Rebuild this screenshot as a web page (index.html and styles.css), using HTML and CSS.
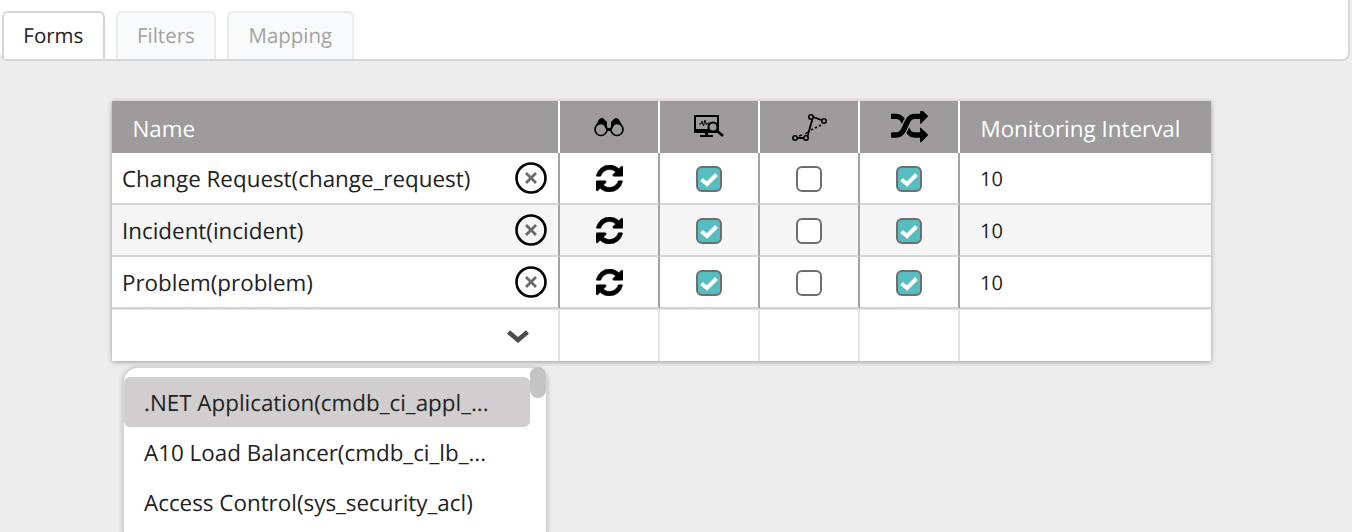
FILE: index.html
```html
<!DOCTYPE html>
<html lang="en">
<head>
<meta charset="utf-8">
<title>Forms</title>
<link rel="stylesheet" href="styles.css">
</head>
<body>
<svg class="defs" width="0" height="0" aria-hidden="true">
  <symbol id="sync" viewBox="128 128 1536 1536"><path d="M1639 1056q0 5-1 7-64 268-268 434.5t-478 166.5q-146 0-282.5-55t-243.5-157l-129 129q-19 19-45 19t-45-19-19-45v-448q0-26 19-45t45-19h448q26 0 45 19t19 45-19 45l-137 137q71 66 161 102t187 36q134 0 250-65t186-179q11-17 53-117 8-23 30-23h192q13 0 22.5 9.5t9.5 22.5zm25-800v448q0 26-19 45t-45 19h-448q-26 0-45-19t-19-45 19-45l138-138q-148-137-349-137-134 0-250 65t-186 179q-11 17-53 117-8 23-30 23h-199q-13 0-22.5-9.5t-9.5-22.5v-7q65-268 270-434.5t480-166.5q146 0 284 55.5t245 156.5l130-129q19-19 45-19t45 19 19 45z"/></symbol>
  <symbol id="remove" viewBox="0 0 32 32"><circle cx="16" cy="16" r="14.500" fill="none" stroke="#000" stroke-width="2.600"/><path d="M11 11l10 10M21 11L11 21" stroke="#6a6a6a" stroke-width="2.800" fill="none"/></symbol>
  <symbol id="on" viewBox="0 0 26 26"><rect x="1" y="1" width="24" height="24" rx="5" fill="#56bdc0" stroke="#6e6e6e" stroke-width="2"/><path d="M5.500 13.500l5.500 4.500 9.500-9.500" fill="none" stroke="#fff" stroke-width="4"/></symbol>
  <symbol id="off" viewBox="0 0 26 26"><rect x="1" y="1" width="24" height="24" rx="5" fill="#fff" stroke="#6e6e6e" stroke-width="2"/></symbol>
</svg>

<nav class="tabbar">
  <span class="tab tab-active">Forms</span>
  <span class="tab">Filters</span>
  <span class="tab">Mapping</span>
</nav>

<main class="content">
  <section class="grid">
    <div class="cell head head-name">Name</div>
    <div class="cell head icon-cell">
      <svg class="hicon" width="32" height="20" viewBox="0 0 32 20"><circle cx="8" cy="12.500" r="6" fill="none" stroke="#000" stroke-width="1.700"/><circle cx="24" cy="12.500" r="6" fill="none" stroke="#000" stroke-width="1.700"/><path d="M2 10L6 2.500Q8 0 10.500 1.500L14 5V11H18V5L21.500 1.500Q24 0 26 2.500L30 10 26 6.500H22L18 14H14L10 6.500H6Z"/></svg>
    </div>
    <div class="cell head icon-cell">
      <svg class="hicon" width="30" height="24" viewBox="0 0 30 24"><path d="M1 1h23v16H1z" fill="none" stroke="#000" stroke-width="2"/><path d="M1 14h15v3H1zM11 17h3v3h-3zM6 20h13v2H6z"/><path d="M5 9h2l1-3 1.500 5 1.500-6 1.500 5 1-2h2" fill="none" stroke="#000" stroke-width="1"/><circle cx="19" cy="12" r="4.500" fill="#9d9b9c" stroke="#000" stroke-width="2"/><path d="M22 15l7 6" stroke="#000" stroke-width="2.600"/></svg>
    </div>
    <div class="cell head icon-cell">
      <svg class="hicon" width="36" height="28" viewBox="0 0 36 28"><path d="M3 25h13l6-21 11 4" fill="none" stroke="#000" stroke-width="1.800"/><path d="M8 23l3-1M14 21l3-2M20 17l2-1M24 15l2-1M28 13l2-1" stroke="#000" stroke-width="1.500"/><circle cx="4" cy="25" r="2.200" fill="#9d9b9c" stroke="#000" stroke-width="1.600"/><circle cx="15" cy="25" r="2.200" fill="#9d9b9c" stroke="#000" stroke-width="1.600"/><circle cx="20" cy="4" r="2.200" fill="#9d9b9c" stroke="#000" stroke-width="1.600"/><circle cx="33" cy="8" r="2.200" fill="#9d9b9c" stroke="#000" stroke-width="1.600"/></svg>
    </div>
    <div class="cell head icon-cell">
      <svg class="hicon" width="37" height="32" viewBox="0 128 1792 1536" preserveAspectRatio="none"><path d="M666 481q-60 92-137 273-22-45-37-72.5t-40.5-63.5-51-56.5-63-35-81.5-14.5h-224q-14 0-23-9t-9-23v-192q0-14 9-23t23-9h224q250 0 410 225zm1126 799q0 14-9 23l-320 320q-9 9-23 9-13 0-22.5-9.5t-9.5-22.5v-192q-32 0-85 .5t-81 1-73-1-71-5-64-10.5-63-18.5-58-28.5-59-40-55-53.5-56-69q59-93 136-273 22 45 37 72.5t40.5 63.5 51 56.5 63 35 81.5 14.5h256v-192q0-14 9-23t23-9q12 0 24 10l319 319q9 9 9 23zm0-896q0 14-9 23l-320 320q-9 9-23 9-13 0-22.5-9.5t-9.5-22.5v-192h-256q-48 0-87 15t-69 45-51 61.5-45 77.5q-32 62-78 171-29 66-49.5 111t-54 105-64 100-74 83-90 68.5-106.5 42-128 16.5h-224q-14 0-23-9t-9-23v-192q0-14 9-23t23-9h224q48 0 87-15t69-45 51-61.5 45-77.5q32-62 78-171 29-66 49.5-111t54-105 64-100 74-83 90-68.5 106.5-42 128-16.5h256v-192q0-14 9-23t23-9q12 0 24 10l319 319q9 9 9 23z"/></svg>
    </div>
    <div class="cell head head-last">Monitoring Interval</div>

    <div class="cell body name-cell"><span>Change Request(change_request)</span><svg class="remove"><use href="#remove"/></svg></div>
    <div class="cell body icon-cell"><svg class="sync"><use href="#sync"/></svg></div>
    <div class="cell body icon-cell"><svg class="check"><use href="#on"/></svg></div>
    <div class="cell body icon-cell"><svg class="check"><use href="#off"/></svg></div>
    <div class="cell body icon-cell"><svg class="check"><use href="#on"/></svg></div>
    <div class="cell body last-cell">10</div>

    <div class="cell body alt name-cell"><span>Incident(incident)</span><svg class="remove"><use href="#remove"/></svg></div>
    <div class="cell body alt icon-cell"><svg class="sync"><use href="#sync"/></svg></div>
    <div class="cell body alt icon-cell"><svg class="check"><use href="#on"/></svg></div>
    <div class="cell body alt icon-cell"><svg class="check"><use href="#off"/></svg></div>
    <div class="cell body alt icon-cell"><svg class="check"><use href="#on"/></svg></div>
    <div class="cell body alt last-cell">10</div>

    <div class="cell body name-cell"><span>Problem(problem)</span><svg class="remove"><use href="#remove"/></svg></div>
    <div class="cell body icon-cell"><svg class="sync"><use href="#sync"/></svg></div>
    <div class="cell body icon-cell"><svg class="check"><use href="#on"/></svg></div>
    <div class="cell body icon-cell"><svg class="check"><use href="#off"/></svg></div>
    <div class="cell body icon-cell"><svg class="check"><use href="#on"/></svg></div>
    <div class="cell body last-cell">10</div>

    <div class="cell foot foot-name"><svg class="chevron" width="24" height="14" viewBox="0 0 24 14"><path d="M2.500 3l9.500 8 9.500-8" fill="none" stroke="#4d4d4d" stroke-width="4.600"/></svg></div>
    <div class="cell foot"></div>
    <div class="cell foot"></div>
    <div class="cell foot"></div>
    <div class="cell foot"></div>
    <div class="cell foot foot-last"></div>
  </section>

  <div class="dropdown">
    <div class="thumb"></div>
    <ul class="options">
      <li class="option option-active">.NET Application(cmdb_ci_appl_...</li>
      <li class="option">A10 Load Balancer(cmdb_ci_lb_...</li>
      <li class="option">Access Control(sys_security_acl)</li>
    </ul>
  </div>
</main>
</body>
</html>
```
FILE: styles.css
```css
* { box-sizing: border-box; }
html, body { margin: 0; height: 532px; overflow: hidden; }
body {
  background: #ededed;
  color: #222;
  font-family: "Open Sans", sans-serif;
  font-size: 20px;
  text-rendering: geometricPrecision;
}
.defs { position: absolute; }
.tabbar {
  height: 61px;
  width: 1350px;
  background: #fff;
  border: 2px solid #d5d5d5;
  border-width: 0 2px 2px 0;
  border-radius: 0 0 8px 8px;
  padding: 11px 0 0 2px;
  display: flex;
  gap: 11px;
}
.tab {
  height: 48px;
  padding: 0 19.300px;
  display: flex;
  align-items: center;
  border: 2px solid #ebebeb;
  border-bottom: 0;
  border-radius: 6px 6px 0 0;
  background: #f9fafb;
  color: #a3a3a3;
  font-size: 20.500px;
}
.tab-active {
  background: #fff;
  color: #222;
  border-color: #d5d5d5;
}
.content { padding: 40px 0 0 112px; }
.grid {
  width: 1099px;
  display: grid;
  grid-template-columns: 448px 100px 100px 100px 100px 251px;
  grid-auto-rows: 52px;
  box-shadow: 0 1px 5px rgba(0, 0, 0, .35);
}
.cell { display: flex; align-items: center; }
.head {
  background: #9d9b9c;
  color: #fff;
  border-right: 2px solid #fff;
  font-size: 22.400px;
}
.head-name { padding: 3px 0 0 20.500px; }
.head-last { border-right: 0; padding: 3px 0 0 20.500px; }
.icon-cell { justify-content: center; }
.body {
  background: #fff;
  border-right: 2px solid #a3a3a3;
  border-bottom: 2px solid #d5d5d5;
  padding-top: 1px;
}
.alt { background: #f5f5f5; }
.name-cell {
  padding: 0 11px 0 10px;
  justify-content: space-between;
  font-size: 22.400px;
}
.last-cell { border-right: 0; padding-left: 20px; }
.foot {
  background: #fff;
  border-right: 2px solid #e2e2e2;
  border-top: 1px solid #e6e6e6;
}
.foot-name { justify-content: flex-end; padding-right: 28px; }
.foot-last { border-right: 0; }
.remove { width: 32px; height: 32px; }
.sync { width: 27px; height: 27px; margin-top: -1px; stroke: #000; stroke-width: 30; }
.check { width: 26px; height: 26px; }
.dropdown {
  position: relative;
  width: 426px;
  height: 166px;
  margin: 5px 0 0 10px;
  background: #fff;
  border: 2px solid #d5d5d5;
  border-bottom: 0;
  border-radius: 16px 16px 0 0;
  box-shadow: 0 1px 4px rgba(0, 0, 0, .2);
  padding-top: 9px;
  font-size: 22.400px;
}
.thumb {
  position: absolute;
  top: -1px;
  right: 0;
  width: 16px;
  height: 31px;
  background: #c4c4c4;
  border-radius: 8px;
}
.options { list-style: none; margin: 0; padding: 0 16px 0 0; }
.option {
  height: 50px;
  padding: 1px 0 0 20px;
  display: flex;
  align-items: center;
  border-radius: 6px;
}
.option-active { background: #d0cecf; }
```
